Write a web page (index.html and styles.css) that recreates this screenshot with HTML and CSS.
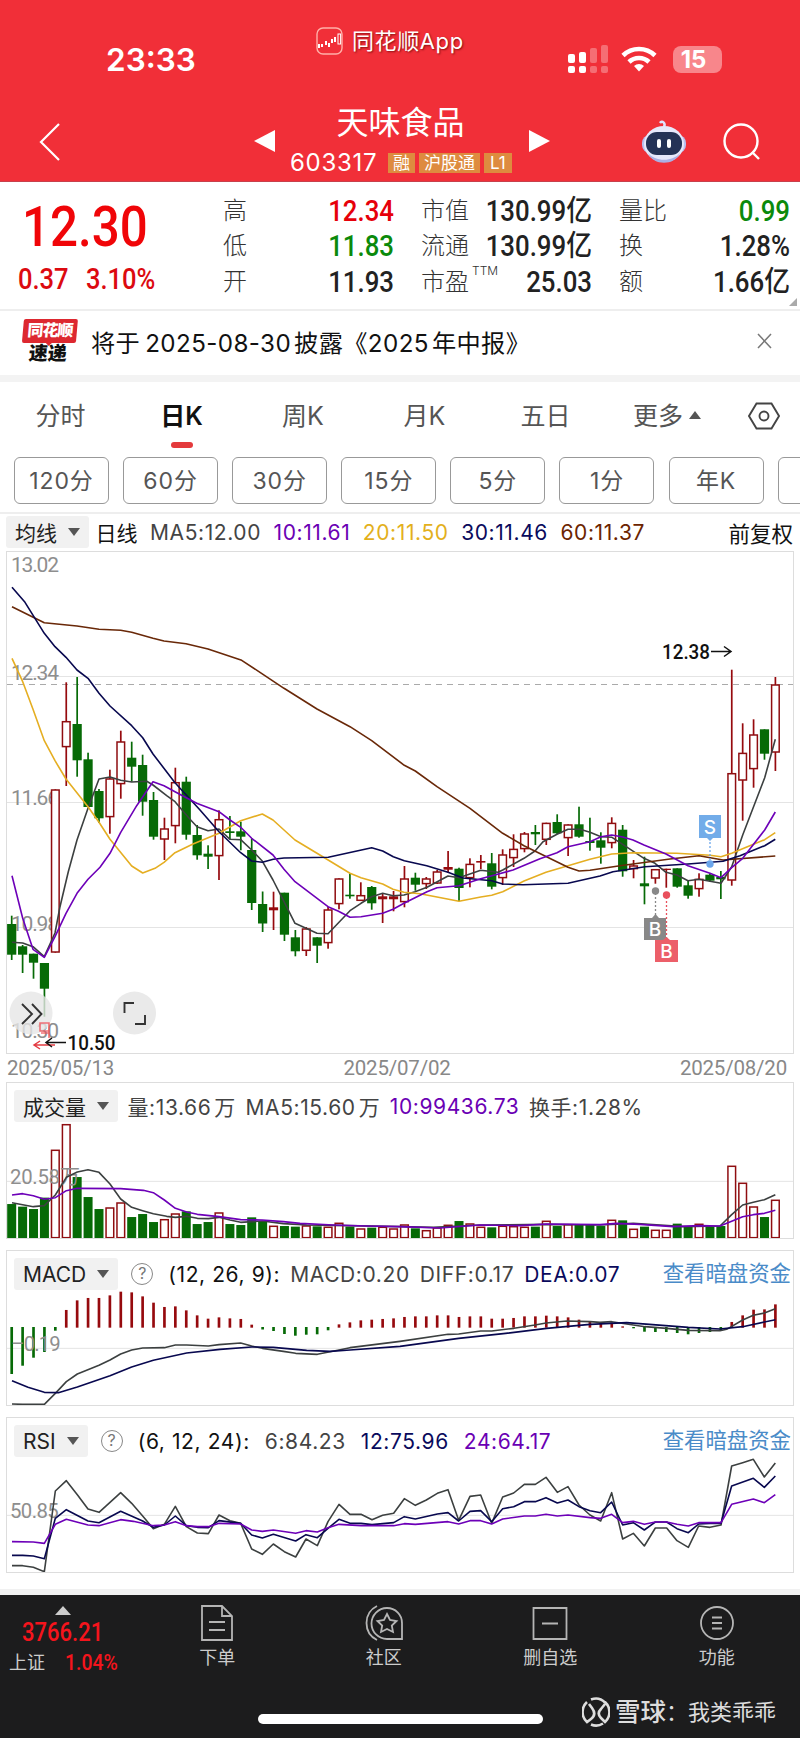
FILE: index.html
```html
<!DOCTYPE html>
<html lang="zh-CN">
<head>
    <meta charset="UTF-8">
    <meta name="viewport" content="width=device-width, initial-scale=1.0">
    <title>天味食品 603317</title>
    <link rel="stylesheet" href="styles.css">
</head>
<body>
    <header class="header">
        <div class="status-bar">
            <div class="time">23:33</div>
            <div class="app-mark">
                <svg width="27" height="28" viewBox="0 0 27 28" fill="none" stroke="#fff">
                    <rect x="1" y="1" width="25" height="26" rx="6" stroke="#ffb0a8" stroke-width="1.4"/>
                    <path d="M3 17v4M6 17v3M10 14v4M13 16v4M16 12v4M19 10v5" stroke-width="2"/>
                    <rect x="22" y="7" width="2.6" height="10"/>
                </svg>
                <span>同花顺App</span>
            </div>
            <div class="status-icons">
                <svg width="42" height="28" viewBox="0 0 42 28" fill="#fff">
                    <rect x="1" y="9" width="7" height="9" rx="2"/><rect x="12" y="7" width="7" height="11" rx="2"/>
                    <rect x="1" y="21" width="7" height="7" rx="2"/><rect x="12" y="21" width="7" height="7" rx="2"/>
                    <g opacity=".3"><rect x="23" y="3" width="7" height="15" rx="2"/><rect x="34" y="0" width="7" height="18" rx="2"/>
                    <rect x="23" y="21" width="7" height="7" rx="2"/><rect x="34" y="21" width="7" height="7" rx="2"/></g>
                </svg>
                <svg class="wifi" width="36" height="26" viewBox="0 0 36 26" fill="none" stroke="#fff" stroke-width="4.6">
                    <path d="M2 9.500a23 23 0 0 1 32 0"/>
                    <path d="M8 16a14.500 14.500 0 0 1 20 0"/>
                    <path d="M18 25.500l-5-5.500a7.500 7.500 0 0 1 10 0z" fill="#fff" stroke="none"/>
                </svg>
                <div class="battery">15</div>
            </div>
        </div>
        <div class="nav">
            <svg class="back" width="22" height="38" viewBox="0 0 22 38" fill="none" stroke="#fff" stroke-width="2.2"><path d="M20 1L2 19l18 18"/></svg>
            <svg class="prev" width="21" height="22" viewBox="0 0 21 22" fill="#fff"><path d="M21 0v22L0 11z"/></svg>
            <div class="stock">
                <h1>天味食品</h1>
                <div class="code"><span class="num">603317</span><span class="tag">融</span><span class="tag">沪股通</span><span class="tag">L1</span></div>
            </div>
            <svg class="next" width="21" height="22" viewBox="0 0 21 22" fill="#fff"><path d="M0 0v22l21-11z"/></svg>
            <svg class="robot" width="46" height="44" viewBox="0 0 46 44">
                <path d="M23 8c2-4-2-7-4-4" fill="none" stroke="#dfe3ff" stroke-width="2.5"/>
                <rect x="1" y="16" width="44" height="18" rx="8" fill="#b9c0f0"/>
                <ellipse cx="23" cy="25" rx="20" ry="18" fill="#e6e8fb"/>
                <path d="M7 34c7 9 25 9 32 0-5 13-27 13-32 0z" fill="#aab0e4"/>
                <rect x="5" y="13" width="36" height="23" rx="11" fill="#243256"/>
                <rect x="16" y="20" width="4" height="9" rx="2" fill="#fff"/><rect x="26" y="20" width="4" height="9" rx="2" fill="#fff"/>
            </svg>
            <svg class="search" width="38" height="38" viewBox="0 0 38 38" fill="none" stroke="#fff" stroke-width="2.4"><circle cx="18" cy="18" r="16.500"/><path d="M29 29l7 7"/></svg>
        </div>
    </header>

    <section class="quote">
        <div class="price">
            <div class="last din">12.30</div>
            <div class="change"><span class="din">0.37</span><span class="din">3.10%</span></div>
        </div>
        <dl class="col col-1">
            <dt>高</dt><dd class="up">12.34</dd>
            <dt>低</dt><dd class="down">11.83</dd>
            <dt>开</dt><dd>11.93</dd>
        </dl>
        <dl class="col col-2">
            <dt>市值</dt><dd>130.99<i>亿</i></dd>
            <dt>流通</dt><dd>130.99<i>亿</i></dd>
            <dt>市盈<sup>TTM</sup></dt><dd>25.03</dd>
        </dl>
        <dl class="col col-3">
            <dt>量比</dt><dd class="down">0.99</dd>
            <dt>换</dt><dd>1.28%</dd>
            <dt>额</dt><dd>1.66<i>亿</i></dd>
        </dl>
        <div class="corner"></div>
    </section>

    <section class="notice">
        <div class="logo"><b>同花顺</b><em>速递</em></div>
        <p>将于<span>2025-08-30</span>披露《<span class="year">2025</span>年中报》</p>
        <svg width="15" height="16" viewBox="0 0 15 16" stroke="#777" stroke-width="1.500"><path d="M1 1l13 14M14 1L1 15"/></svg>
    </section>

    <nav class="tabs">
        <span>分时</span>
        <span class="active">日K</span>
        <span>周K</span>
        <span>月K</span>
        <span>五日</span>
        <span class="more">更多<i></i></span>
        <svg width="32" height="28" viewBox="0 0 32 28" fill="none" stroke="#444" stroke-width="1.900"><path d="M8.500 1.500h15L31 14l-7.500 12.500h-15L1 14z"/><circle cx="16" cy="14" r="4.500"/></svg>
    </nav>

    <div class="periods">
        <span>120分</span><span>60分</span><span>30分</span><span>15分</span><span>5分</span><span>1分</span><span>年K</span><span></span>
    </div>

    <div class="ma-row">
        <span class="chip">均线</span>
        <span class="black daily">日线</span>
        <span>MA5:12.00</span>
        <span class="purple">10:11.61</span>
        <span class="yellow">20:11.50</span>
        <span class="navy">30:11.46</span>
        <span class="brown">60:11.37</span>
        <span class="black adjust">前复权</span>
    </div>

    <section class="panel price-panel">
        <svg width="786" height="501" viewBox="7 552 786 501">
            <path class="grid" d="M7 676.500h786M7 802.500h786M7 927.500h786"/>
            <path d="M7 684.500h786" stroke="#aaa" stroke-dasharray="6 5"/>
            <g class="axis">
                <text x="11" y="572" textLength="48">13.02</text>
                <text x="11" y="679.500" textLength="48">12.34</text>
                <text x="11" y="805" textLength="48">11.66</text>
                <text x="11" y="931" textLength="48">10.98</text>
                <text x="11" y="1038" textLength="48">10.30</text>
            </g>
            <g id="candles"></g>
            <g class="lines">
                <polyline class="s-dark" points="12,942.3 22.7,943 33,946.7 44.3,956.7 55,933 60,906.7 68.3,871.7 77,840 88,808.3 99,779 110,777 120.7,780.3 131.7,782 146.7,781.3 153,785 166.7,795.7 175,801.7 190,819.3 197,826.7 208,830.7 219,829 230,839.3 240.7,839.7 251.7,850 262,860.7 273,880 284,901.7 295,923.3 317,933.3 328,933.7 339,922.3 350,910.7 361,903.3 371.7,896.7 382.7,893.3 393,895.7 404,895 415,891.7 427,887.3 448,876 459,877.7 480.7,870.3 498,872.3 502.7,870 524,858.3 535,851 543,841.7 557,834.3 568,829.3 580,829.3 590,832.3 601,836.7 612,837.3 622.7,844.3 644,858.3 655,863.3 666,872.3 677,875 688,880.7 699,879.3 721,883.3 731.7,866.7 742.7,835 764.7,777.7 775.3,739.3"/>
                <polyline class="s-yellow" points="12,658.3 22.7,681.7 33,709.3 44.3,740.7 55,760.7 66,779 88,806.7 99,822.3 110,839.3 131.7,866 142.7,873 155,868.3 164,862.3 175,852.7 193,844 219,833.3 240.7,820.7 262.3,814 273,820 295,840 317,853.3 350,873.3 361,877.7 382.7,884 393,889.3 404,892.3 420,893.7 437,897 459,901.3 480.7,897 491.7,895.3 502.7,891.7 524,881 546,872.3 568,865.7 590,859.3 611.7,854 633,852.7 676.7,853.3 710,855.3 721,856.7 731.7,853.3 764.7,839.7 775.3,832.7"/>
                <polyline class="s-brown" points="12,606.7 44.3,622.7 77,626 99,629.3 120.7,630.3 131.7,632.3 153,638.3 164,641 186,643.7 208,649 241.7,660.3 260,672.3 284,688.3 317,709 350,726.7 371.7,740.7 404.3,765.3 415.3,771 437,786.7 470,808.3 502.7,833.3 524,845.7 568,867.3 579,871 590,870.3 620,865.7 670,859 699,855.7 723,860 775.3,856"/>
                <polyline class="s-navy" points="12,587.3 25,602.3 44.3,633.3 55,646.7 66,657.3 77,670 88,678.3 99,693.3 110,706 131.7,725.7 142.7,737.7 153,754 175,782.7 200,810 219,831.7 240.7,852.7 251.7,861 262.3,862.3 273.3,859.3 284,858 328.3,857.3 371.7,847.7 382.7,851 393.3,856.7 404.3,860.7 426.7,865.7 448,872.3 463,878 491.7,880.7 502.7,884 523,884.7 568,883.3 600,876 613,871.7 645,866.7 688,864 723,861.3 740,855.7 764.7,845.7 775.3,839.3"/>
                <polyline class="s-purple" points="12,875.7 22.7,918.3 33,949.3 44.3,957.3 55,936.7 66,913.3 77,893.3 88,879.3 100,867.3 110,853.3 120.7,832.3 136.7,805.7 153,781.7 164,785.7 175,791.7 196.7,803.3 219,811.7 230,820 240.7,827.3 251.7,838.3 273,855 284,869.3 295,881.7 328,906.7 338,911 350,917.3 361,916.7 382.7,913.3 393,909.3 404,903.3 415,897.7 427,891.7 437,887.7 459,885.7 480.7,878.7 513,870 540,858.7 557,852.7 568,846.7 590,841.7 601,836.7 611.7,835 622.7,837 633,840 644,845 666,854 688,865.7 710,873.3 721,877.7 731.7,867.7 742.7,858.3 764.7,830 775.3,812"/>
            </g>

            <!-- buy / sell marks -->
            <g class="marks">
                <path d="M655.500 893v23" stroke="#888"/><circle cx="655.500" cy="891" r="3.700" fill="#888"/>
                <path d="M644 918h8l3.500-4 3.500 4h7v22h-22z" fill="#888"/><text x="655" y="936">B</text>
                <path d="M666.500 897v42" stroke="#e9505c"/><circle cx="666.500" cy="895" r="3.700" fill="#e9505c"/>
                <path d="M655 940h8l3.500-3 3.500 3h8v22h-23z" fill="#ec5f69"/><text x="666.500" y="958">B</text>
                <path d="M710 842v18" stroke="#6ba6ec"/><circle cx="710" cy="864" r="3.700" fill="#6ba6ec"/>
                <path d="M699 815h22v23h-8l-3 3-3-3h-8z" fill="#72ace9"/><text x="710" y="834">S</text>
            </g>
            <text class="peak" x="662" y="658.500" textLength="48" lengthAdjust="spacingAndGlyphs">12.38</text>
            <path class="arrow" d="M711 651.500h19M724 646.500l7 5-7 5"/>

            <!-- floating buttons over the chart -->
            <circle cx="31" cy="1013" r="21.500" fill="#e6e6e6" opacity=".8"/>
            <path d="M22 1004l10 10-10 10M32 1004l9.500 10-9.500 10" fill="none" stroke="#333" stroke-width="1.900"/>
            <circle cx="134.500" cy="1013" r="21.500" fill="#eaeaea"/>
            <path d="M124.500 1013v-10h9.500M145 1015v9h-10" fill="none" stroke="#333" stroke-width="1.900"/>
            <path d="M40 1023h9v8h-9zM49 1024v14M41 1033h8" fill="none" stroke="#f0525a" stroke-width="1.600" opacity=".8"/>
            <path d="M34 1045h21M40 1041l-6 4 6 4" fill="none" stroke="#e43b42" stroke-width="1.500"/>
            <path class="arrow" d="M47 1042.500h19M52 1038l-6 4.500 6 4.500"/>
            <text class="peak" x="67.500" y="1049.500" textLength="48" lengthAdjust="spacingAndGlyphs">10.50</text>
        </svg>
    </section>

    <div class="dates"><span>2025/05/13</span><span>2025/07/02</span><span>2025/08/20</span></div>

    <section class="panel volume-panel">
        <div class="panel-head">
            <span class="chip">成交量</span>
            <span>量:13.66<b>万</b></span>
            <span>MA5:15.60<b>万</b></span>
            <span class="purple">10:99436.73</span>
            <span>换手:1.28%</span>
        </div>
        <svg width="786" height="115" viewBox="21 249 2358 345">
            <path class="grid grid-3x" d="M21 424h2358"/>
            <g id="volumes"></g>
            <text class="axis axis-3x" x="30" y="431" textLength="210">20.58万</text>
            <g class="lines lines-3x">
                <polyline class="s-dark" points="36,488 100,500 133,497 166,465 199,412 232,396 264,389 297,397 330,432 362,477 395,502 428,512 460,521 500,529 526,532 560,529 592,535 625,536 657,532 690,540 722,547 787,543 850,551 920,555 1000,556 1200,560 1300,562 1440,555 1640,553 1800,555 1900,550 2050,560 2160,558 2195,524 2228,495 2260,487 2293,479 2326,464"/>
                <polyline class="s-purple" points="36,465 68,461 100,467 133,478 166,473 199,452 232,445 362,446 430,451 460,458 493,480 526,505 560,516 592,523 657,530 722,539 787,540 850,545 900,550 1000,555 1100,558 1200,560 1320,564 1440,555 1560,557 1640,552 1800,554 1850,550 1920,553 2020,560 2100,557 2160,558 2228,530 2260,524 2293,520 2326,511"/>
            </g>
        </svg>
    </section>

    <section class="panel macd-panel">
        <div class="panel-head">
            <span class="chip">MACD</span>
            <span class="help">?</span>
            <span class="black">(12, 26, 9):</span>
            <span>MACD:0.20</span>
            <span>DIFF:0.17</span>
            <span class="navy">DEA:0.07</span>
            <a>查看暗盘资金</a>
        </div>
        <svg width="786" height="114" viewBox="21 153 2358 342">
            <path class="grid grid-3x" d="M21 325h2358"/>
            <g id="macd"></g>
            <text class="axis axis-3x" x="34" y="332" textLength="148">–0.19</text>
            <g class="lines lines-3x">
                <polyline class="s-dark" points="36,492 68,493 133,493 166,460 199,425 232,402 297,376 330,360 362,342 395,330 428,324 493,323 526,315 560,315 625,318 657,314 722,309 755,318 787,325 850,334 887,340 952,343 1017,330 1050,323 1200,304 1344,283 1376,282 1442,273 1475,273 1542,265 1605,255 1638,249 1700,243 1770,245 1800,247 1835,245 1935,260 2000,265 2065,271 2160,272 2180,268 2228,240 2260,226 2293,219 2326,206"/>
                <polyline class="s-navy" points="36,422 84,442 133,457 175,458 232,441 330,407 395,381 460,361 560,339 660,328 755,321 820,322 920,331 990,334 1050,330 1200,319 1376,295 1510,281 1640,265 1770,253 1880,248 2065,262 2160,267 2228,260 2326,239"/>
            </g>
        </svg>
    </section>

    <section class="panel rsi-panel">
        <div class="panel-head">
            <span class="chip">RSI</span>
            <span class="help">?</span>
            <span class="black">(6, 12, 24):</span>
            <span>6:84.23</span>
            <span class="navy">12:75.96</span>
            <span class="purple">24:64.17</span>
            <a>查看暗盘资金</a>
        </div>
        <svg width="786" height="114" viewBox="21 654 2358 342">
            <path class="grid grid-3x" d="M21 826h2358"/>
            <text class="axis axis-3x" x="30" y="835" textLength="146">50.85</text>
            <g class="lines lines-3x">
                <polyline class="s-dark" points="36,977 68,977 100,982 133,995 166,753 199,722 232,764 264,807 297,817 330,787 362,758 395,790 428,828 460,866 493,853 526,799 559,860 592,879 625,881 657,825 690,842 722,850 755,927 787,943 820,912 853,935 887,951 918,897 952,917 984,845 1017,793 1050,823 1083,823 1116,839 1148,826 1181,820 1213,776 1246,796 1279,780 1312,760 1344,749 1376,841 1410,769 1442,765 1475,850 1508,771 1541,759 1573,733 1606,733 1638,712 1672,757 1704,740 1737,795 1770,825 1802,843 1835,758 1868,897 1900,880 1933,918 1966,864 2000,864 2031,902 2065,922 2096,858 2130,862 2163,855 2195,678 2228,668 2260,658 2293,711 2326,669"/>
                <polyline class="s-navy" points="36,946 68,946 100,948 133,956 166,835 199,809 264,843 297,848 362,814 428,843 460,862 493,855 526,828 559,857 592,862 625,863 657,842 722,850 755,885 787,894 820,883 887,903 918,884 952,893 984,865 1017,838 1050,850 1083,850 1116,854 1181,848 1213,830 1246,837 1312,822 1344,818 1376,843 1410,814 1442,812 1475,845 1508,806 1541,800 1573,785 1606,785 1638,773 1672,789 1704,780 1737,800 1770,812 1802,818 1835,786 1868,855 1900,848 1933,870 1966,846 2000,846 2031,866 2065,878 2096,852 2130,850 2163,850 2195,738 2260,715 2293,742 2326,708"/>
                <polyline class="s-purple" points="36,905 100,906 133,910 166,853 199,838 264,855 297,857 362,839 400,844 460,857 493,855 526,845 559,857 592,860 625,860 657,850 722,852 755,870 787,874 820,870 887,880 918,872 952,876 984,863 1017,853 1083,857 1181,857 1213,851 1246,853 1344,845 1376,852 1410,842 1442,842 1475,852 1508,837 1573,828 1606,828 1638,823 1672,828 1704,825 1770,833 1802,835 1835,823 1868,848 1900,844 1933,853 1966,846 2000,846 2031,853 2065,858 2096,848 2163,848 2195,793 2260,777 2293,788 2326,764"/>
            </g>
        </svg>
    </section>

    <footer class="footer">
        <div class="index">
            <i></i>
            <strong class="din">3766.21</strong>
            <div><span>上证</span><b class="din">1.04%</b></div>
        </div>
        <div class="item">
            <svg width="32" height="36" viewBox="0 0 32 36"><path d="M1 1h20l10 10v24H1zM21 1v10h10M8 17h16M8 25h16"/></svg>
            <span>下单</span>
        </div>
        <div class="item">
            <svg width="38" height="36" viewBox="0 0 38 36"><path d="M12 1C-2 8-2 28 12 35M22 3a15 15 0 1 0 0 31h15V18A15 15 0 0 0 22 3z"/><path d="M22 9l3 6 6.500 1-4.700 4.500 1.200 6.500-6-3-6 3 1.200-6.500-4.700-4.500 6.500-1z"/></svg>
            <span>社区</span>
        </div>
        <div class="item">
            <svg width="36" height="36" viewBox="0 0 36 36"><path d="M1.500 3h33v31h-33zM10 18.500h16"/></svg>
            <span>删自选</span>
        </div>
        <div class="item">
            <svg width="34" height="36" viewBox="0 0 34 36"><circle cx="17" cy="18" r="16"/><path d="M12 12.500h10M12 18h10M12 23.500h10"/></svg>
            <span>功能</span>
        </div>
        <div class="home-bar"></div>
        <div class="watermark">
            <svg width="28" height="30" viewBox="0 0 28 30" fill="none" stroke="#ddd" stroke-width="2.600"><path d="M9 2.500a13 13 0 0 1 14 3M5 5a13.500 13.500 0 0 0 0 20l4-3c4-3 4-7 1-11L7 7M23 5a13.500 13.500 0 0 1 0 20l-4-4c-3-3-3-6 0-9l4-5M9 27.500a13 13 0 0 0 12-1"/></svg>
            <b>雪球</b><span>：我类乖乖</span>
        </div>
    </footer>

    <script src="chart.js"></script>
</body>
</html>
```

FILE: styles.css
```css
* {
    box-sizing: border-box;
}

body {
    margin: 0;
    width: 800px;
    height: 1738px;
    overflow: hidden;
    background: #fff;
    color: #444;
    font-family: Inter, 'Noto Sans CJK SC', sans-serif;
}

svg {
    display: block;
    flex: none;
}

i, em {
    font-style: normal;
}

.din {
    font-family: Roboto, 'Noto Sans CJK SC', sans-serif;
    font-weight: 500;
    display: inline-block;
    transform: scaleX(0.88);
    transform-origin: left;
}

.black { color: #111; }
.purple { color: #6a00b4; }
.yellow { color: #e3b01c; }
.navy { color: #0a0a5c; }
.brown { color: #6b2400; }

/* header */
.header {
    height: 182px;
    background: #f12f38;
    color: #fff;
    border-bottom: 1px solid #c8404c;
}

.status-bar {
    height: 92px;
    display: flex;
    align-items: flex-start;
}

.time {
    width: 210px;
    margin: 40px 0 0 106px;
    font-size: 31.5px;
    line-height: 39px;
    font-weight: 600;
}

.app-mark {
    display: flex;
    align-items: center;
    gap: 9px;
    margin-top: 26px;
    width: 251px;
    font-size: 22px;
    line-height: 30px;
    letter-spacing: 0.6px;
    text-shadow: 1px 1px 2px rgba(90, 0, 0, 0.7);
}

.status-icons {
    display: flex;
    align-items: center;
    margin-top: 45px;
}

.wifi {
    margin: 0 16px 0 12px;
}

.battery {
    width: 49px;
    height: 27px;
    border-radius: 8px;
    background: #f8868b;
    font-size: 24px;
    line-height: 27px;
    font-weight: 700;
    text-align: center;
    padding-right: 8px;
}

.nav {
    height: 89px;
    display: flex;
    align-items: flex-start;
}

.back {
    margin: 31px 193px 0 39px;
}

.prev,
.next {
    margin-top: 38px;
}

.stock {
    width: 254px;
    text-align: center;
}

.stock h1 {
    margin: 11px 3px 0 0;
    font-size: 32px;
    line-height: 40px;
    font-weight: 400;
}

.code {
    display: flex;
    align-items: center;
    margin: 7px 0 0 15px;
    height: 26px;
    font-size: 24px;
    line-height: 26px;
}

.code .num {
    width: 98px;
    text-align: left;
    letter-spacing: 0.7px;
}

.tag {
    margin-right: 4px;
    padding: 0 5px;
    height: 20px;
    background: #de8b3f;
    font-size: 17px;
    line-height: 20px;
}

.tag:last-child {
    padding: 0 6px;
}

.robot {
    margin: 27px 36px 0 91px;
}

.search {
    margin-top: 31px;
}

/* quote */
.quote {
    position: relative;
    display: flex;
    height: 129px;
    border-bottom: 2px solid #eee;
}

.price {
    width: 223px;
    padding-left: 22px;
    color: #f00508;
}

.last {
    margin-top: 12px;
    font-size: 56px;
    line-height: 66px;
}

.change {
    display: flex;
    gap: 10px;
    margin: 4px 0 0 -4px;
    font-size: 29px;
    line-height: 30px;
    color: #dc0a10;
}

.col {
    display: grid;
    grid-template-columns: 48px 1fr;
    grid-auto-rows: 35.4px;
    width: 171px;
    margin: 11px 0 0;
    font-size: 24px;
    line-height: 36px;
    color: #333;
    font-weight: 300;
}

.col-2,
.col-3 {
    margin-left: 27px;
}

.col dt {
    white-space: nowrap;
}

.col dd {
    margin: 0;
    font-family: Roboto, 'Noto Sans CJK SC', sans-serif;
    font-size: 29px;
    font-weight: 500;
    text-align: right;
    white-space: nowrap;
    transform: scaleX(0.89);
    transform-origin: right;
    color: #222;
}

.col dd.up { color: #e6000a; }
.col dd.down { color: #0b8a0b; }

.col sup {
    position: relative;
    top: -6px;
    left: 3px;
    font-size: 12px;
    line-height: 0;
}

.corner {
    position: absolute;
    right: 3px;
    bottom: 3px;
    border: 4px solid transparent;
    border-right-color: #aaa;
    border-bottom-color: #aaa;
}

/* notice */
.notice {
    display: flex;
    align-items: center;
    height: 71px;
    padding: 0 28px 4px 22px;
    border-bottom: 7px solid #f3f3f3;
}

.logo {
    position: relative;
    width: 54px;
    text-align: center;
    transform: skewX(-5deg);
}

.logo b {
    display: block;
    height: 24px;
    background: #dd2830;
    border-radius: 2px;
    color: #fff;
    font-size: 16px;
    line-height: 23px;
    font-weight: 900;
    letter-spacing: -1px;
}

.logo::after {
    content: '';
    position: absolute;
    left: 23px;
    top: 23px;
    border: 4px solid transparent;
    border-bottom: 0;
    border-top-color: #dd2830;
}

.logo em {
    display: block;
    margin-top: 1px;
    color: #111;
    font-size: 19px;
    line-height: 20px;
    font-weight: 900;
}

.notice p {
    flex: 1;
    margin: 0 0 0 15px;
    font-size: 24.2px;
    letter-spacing: 0.4px;
    color: #111;
}

.notice p span {
    margin: 0 3px 0 5px;
}

.notice p .year {
    margin-left: 0;
}

/* tabs */
.tabs {
    display: grid;
    grid-template-columns: 121px 121px 122px 121px 121px 122px 1fr;
    align-items: center;
    height: 66px;
    padding-top: 1px;
    text-align: center;
    font-size: 25px;
    line-height: 36px;
    color: #555;
}

.tabs .active {
    position: relative;
    color: #111;
    font-weight: 600;
}

.active::after {
    content: '';
    position: absolute;
    left: 50px;
    bottom: -14px;
    width: 22px;
    height: 6px;
    border-radius: 3px;
    background: #e43a3c;
}

.more i {
    display: inline-block;
    margin-left: 6px;
    border: 6px solid transparent;
    border-top: 0;
    border-bottom: 8px solid #555;
    vertical-align: 6px;
}

.tabs svg {
    margin-left: 20px;
}

.periods {
    display: flex;
    gap: 14.1px;
    height: 66px;
    padding: 9px 0 0 14px;
    border-bottom: 2px solid #eee;
    overflow: hidden;
}

.periods span {
    flex: 0 0 95px;
    height: 47px;
    border: 1px solid #999;
    border-radius: 6px;
    text-align: center;
    font-size: 23px;
    line-height: 47px;
    color: #555;
    letter-spacing: 0.9px;
}

/* indicator rows */
.ma-row,
.panel-head {
    display: flex;
    align-items: center;
    font-size: 21px;
    letter-spacing: 0.6px;
    white-space: nowrap;
}

.ma-row {
    height: 37px;
    padding: 0 7px 1px 6px;
    gap: 12.5px;
}

.ma-row .daily {
    margin-left: -6px;
    letter-spacing: 0;
}

.ma-row .adjust {
    margin-left: auto;
    font-size: 21.5px;
    letter-spacing: 0;
}

.chip {
    display: flex;
    align-items: center;
    height: 32px;
    padding: 0 9px;
    border-radius: 3px;
    background: #f1f1f1;
    color: #222;
    font-size: 21px;
    letter-spacing: 0;
}

.chip::after {
    content: '';
    margin-left: 11px;
    border: 6px solid transparent;
    border-bottom: 0;
    border-top: 8px solid #555;
}

.panel {
    margin: 0 6px;
    border: 1px solid #ddd;
}

.price-panel {
    height: 503px;
}

.dates {
    display: flex;
    justify-content: space-between;
    height: 28px;
    padding: 0 13px 0 7px;
    font-family: Roboto, sans-serif;
    font-size: 20.5px;
    line-height: 28px;
    letter-spacing: -0.2px;
    color: #888;
}

.volume-panel { height: 157px; }
.macd-panel { height: 156px; margin-top: 11px; }
.rsi-panel { height: 156px; margin-top: 11px; }

.panel-head {
    height: 40px;
    padding: 6px 2px 0 7px;
}

.panel-head b {
    font-weight: 400;
    margin-left: 3px;
}

.panel-head a {
    margin-left: auto;
    color: #4a8bc8;
    font-size: 21.4px;
    line-height: 28px;
    letter-spacing: 0;
    padding-bottom: 3px;
}

.volume-panel .panel-head { gap: 9.5px; }
.macd-panel .panel-head { gap: 10px; }
.rsi-panel .panel-head { gap: 15px; }

.help {
    width: 22px;
    height: 22px;
    margin: 0 5px 0 3px;
    border: 1.5px solid #888;
    border-radius: 50%;
    color: #777;
    font-size: 16px;
    line-height: 19px;
    letter-spacing: 0;
    text-align: center;
}

.rsi-panel .help {
    margin: 0 0 0 -2px;
}

/* chart drawing */
.price-panel svg { overflow: visible; }
.grid { stroke: #e4e4e4; fill: none; }
.grid-3x { stroke-width: 3; }
.axis { font: 21px Roboto, 'Noto Sans CJK SC', sans-serif; fill: #8e8e8e; }
.axis-3x { font-size: 61px; }
.lines polyline { fill: none; stroke-width: 1.6; stroke-linejoin: round; }
.lines-3x polyline { stroke-width: 4.8; }
.s-dark { stroke: #3c4040; }
.s-purple { stroke: #6d00b8; }
.s-yellow { stroke: #e5ae22; }
.s-navy { stroke: #08084f; }
.s-brown { stroke: #692808; }
.peak { font: 500 21px Roboto, sans-serif; fill: #111; }
.arrow { fill: none; stroke: #111; stroke-width: 1.5; }
.marks path { stroke-width: 1.3; stroke-dasharray: 2 2; }
.marks text { font: 500 19px Inter, sans-serif; fill: #fff; text-anchor: middle; }
.up-box { fill: #fff; stroke: #8f0d10; }
.up-fill { fill: #960a0e; }
.down-fill { fill: #066a06; }

/* footer */
.footer {
    position: relative;
    display: flex;
    height: 149px;
    margin-top: 16px;
    border-top: 6px solid #f1f1f1;
    background: #1c1c1d;
    color: #ccc;
}

.index {
    width: 134px;
    padding-top: 11px;
}

.index > i {
    display: block;
    width: 0;
    margin-left: 55px;
    border: 8.5px solid transparent;
    border-top: 0;
    border-bottom: 9px solid #ccc;
}

.index strong {
    display: block;
    margin: 2px 0 0 22px;
    color: #f5141c;
    font-size: 25px;
    line-height: 32px;
}

.index div {
    display: flex;
    align-items: center;
    gap: 20px;
    padding-left: 9px;
    font-size: 18px;
    line-height: 27px;
}

.index b {
    color: #f5141c;
    font-size: 22px;
}

.item {
    display: flex;
    flex-direction: column;
    align-items: center;
    width: 166.5px;
    padding-top: 10px;
    font-size: 18px;
    line-height: 26px;
}

.item svg {
    fill: none;
    stroke: #b5b5b5;
    stroke-width: 1.8;
    margin-bottom: 4px;
}

.home-bar {
    position: absolute;
    left: 258px;
    bottom: 14px;
    width: 285px;
    height: 10px;
    border-radius: 5px;
    background: #fff;
}

.watermark {
    position: absolute;
    left: 582px;
    bottom: 8px;
    display: flex;
    align-items: center;
    color: #ddd;
    font-size: 22px;
    line-height: 36px;
}

.watermark b {
    margin-left: 5px;
    font-size: 25.5px;
    font-weight: 500;
}
```

FILE: chart.js
```javascript
// x position of the n-th trading day
const dayX = i => 11.7 + i * 10.91;

// r = up, g = down, then high, body top, body bottom, low
const candles = `g 915.7 924 954.7 960
g 945 946.3 954.7 973
g 953.7 953.7 962.7 978.7
g 963 963 988.7 1016.7
r 789.3 789.3 952.7 952.7
r 682.3 721 747.3 786
g 677 724 760.3 776.7
g 752.7 759.3 807 807
g 789 791 818.3 823
r 769.7 778.3 817.3 833.7
r 730.7 741.3 784.3 798.7
g 741.7 757.7 766.7 781.7
g 754.7 765 801.7 815.7
g 792 800 836.7 839.7
r 817.7 828.3 839.7 860
r 767.7 782 826.3 843.3
g 776.7 781.7 834.7 839.7
g 825 835 855.3 859.7
g 845.3 853.7 856.7 869
r 810.3 819 856.3 880
g 816 831.3 833 839
g 821.7 831.3 836.7 850.3
g 838.3 850 903 910
g 891.5 904 923.5 932
r 891.7 907.3 910.3 930
g 892.7 892.7 934.7 941
g 930 937.3 951.3 956.3
r 927 928.3 951 956
g 937.3 937.3 945.7 963
r 906.7 909.3 943.3 948.7
r 878.3 878.3 904.3 909.3
g 873.7 894.7 896.3 898.7
r 882.3 895 901 901
g 886 887 903.3 909.7
r 893.3 896.3 899.3 923
r 891 896.3 899.3 911.3
r 866 878.3 902.3 907.3
g 872.7 877.7 884.7 890.7
r 877 878.3 884.3 889
r 870 871.3 883.7 884
r 851 867 869.7 873
g 867.7 868.7 888 901
r 858.3 863.7 878.3 887.3
r 855 861 862.6 869
g 853 863.3 886.7 889.3
r 849.3 854.3 878.3 885
r 834.3 848.7 858.3 867
r 832 833.3 849.3 852.3
g 825 832 834.3 845
r 822.7 822.7 840 845
g 814.3 822 833.3 834
r 824.3 824.3 838.3 856
g 806.7 824.3 836.7 837.7
g 817.7 841 843 850.7
g 832.3 840.3 847.7 863.7
r 817.3 822.7 843.3 848.3
g 825 829.7 871.3 876.7
r 860 865.3 869.3 878.3
g 856.7 883.3 886.3 904.3
r 869 869 878.7 883.7
r 868.7 868.7 870 887.7
g 868.3 868.3 886.7 887.7
g 880.7 885.3 895.7 898.7
r 873.3 878.7 889.3 896.7
g 873.3 874.7 880.7 881.7
g 871 877 879.3 899
r 669.7 773 880.7 885.7
r 723.3 752.7 780.7 820.7
r 719.3 734.3 769.3 787.7
g 729.3 729.3 753.7 759.7
r 677 684.3 752.7 771`.split('\n').map(row => row.split(' '));

const volumes = [34.3, 31.7, 29.3, 40.7, 88.7, 114.3, 61.3, 41.3, 29.3, 31, 36, 21.3, 24.3, 16.3, 19.3, 25, 27, 14.3, 16.3, 26, 14.3, 13.3, 21, 16.7, 12.7, 12.3, 11.7, 13, 12, 11.7, 15.7, 11.7, 10, 10.7, 11.7, 10, 14, 10, 8.3, 11, 13.7, 17.3, 15, 11.7, 11, 12.7, 12.3, 11.7, 11.7, 17.7, 12.3, 14.3, 14.3, 14, 12.3, 18.7, 18, 9.7, 11.7, 8.7, 8.7, 14.7, 11.7, 14.7, 11.7, 12.3, 72.7, 55.7, 32, 21.3, 38.7];

const macd = [-47, -38.7, -30.7, -25, -3.7, 17.7, 27.3, 29.7, 29.7, 32.3, 36, 35.3, 31.3, 25, 20.7, 21.3, 17.3, 12.3, 9, 10.3, 9.3, 8.7, 3, -2.5, -4, -7, -8.7, -7.7, -7.3, -3.3, 3.3, 5.3, 7.3, 8, 8.7, 9.3, 10.7, 11.3, 11.3, 12.3, 12.3, 10.7, 11.3, 11.3, 9, 9, 9.7, 11.3, 11.3, 12, 11.3, 10.3, 8, 5.7, 5, 5, 1.3, -1.3, -4.7, -5, -5, -6, -7.3, -6, -5, -3.7, 5.7, 12.3, 18, 18.3, 23.3];

function rect(x, y, w, h, cls, stroke) {
    return `<rect x="${x}" y="${y}" width="${w}" height="${h}" class="${cls}" stroke-width="${stroke || 0}"/>`;
}

let html = '';
candles.forEach(([type, ...v], i) => {
    const [high, top, bottom, low] = v.map(Number);
    const x = dayX(i);
    const h = bottom - top;
    const fill = type === 'r' ? 'up-fill' : 'down-fill';
    html += rect(x - 0.85, high, 1.7, low - high, fill);
    if (type === 'r' && h > 3.5) {
        html += rect(x - 3.8, top + 0.7, 7.6, h - 1.4, 'up-box', 1.5);
    } else {
        html += rect(x - 4.6, top, 9.2, h, fill);
    }
});
document.getElementById('candles').innerHTML = html;

html = '';
volumes.forEach((v, i) => {
    const x = dayX(i) * 3;
    const h = v * 3;
    if (candles[i][0] === 'r') {
        html += rect(x - 11.5, 595 - h + 2, 23, h - 4, 'up-box', 4.5);
    } else {
        html += rect(x - 13.5, 595 - h, 27, h, 'down-fill');
    }
});
document.getElementById('volumes').innerHTML = html;

html = '';
macd.forEach((v, i) => {
    const h = Math.abs(v) * 3;
    html += rect(dayX(i) * 3 - 4, v > 0 ? 263 - h : 261, 8, h, v > 0 ? 'up-fill' : 'down-fill');
});
document.getElementById('macd').innerHTML = html;
```
